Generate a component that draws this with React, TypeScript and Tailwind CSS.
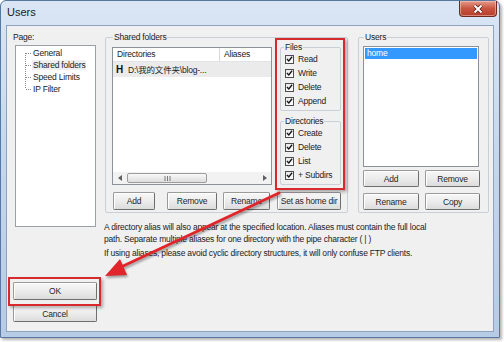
import React from "react";

type Kids = { children?: React.ReactNode; className?: string };

const Btn = ({ children, className = "" }: Kids) => (
  <div
    className={
      "flex items-center justify-center rounded-[2px] border border-[#9a9a9a] border-r-[#6e6e6e] border-b-[#6e6e6e] bg-linear-to-b from-[#f7f7f7] via-[#ececec] to-[#dcdcdc] shadow-[inset_1px_1px_0_#ffffff] text-[#1f1f1f] " +
      className
    }
  >
    {children}
  </div>
);

const Check = ({ label }: { label: string }) => (
  <div className="flex h-[14px] items-center pl-[3px]">
    <span className="flex h-[9px] w-[9px] items-center justify-center border border-[#4d4d4d] bg-linear-to-br from-[#e6e6e6] to-white">
      <svg viewBox="0 0 9 9" className="h-[8px] w-[8px]">
        <path d="M1.2 4.6 L3.6 7 L7.8 1.6" fill="none" stroke="#151515" strokeWidth="1.7" />
      </svg>
    </span>
    <span className="ml-[4px]">{label}</span>
  </div>
);

// connector of a tree row: first, middle or last
const TreeLine = ({ pos }: { pos: "first" | "mid" | "last" }) => (
  <svg width="15" height="12" className="shrink-0">
    <line
      x1="9.5"
      y1={pos === "first" ? 6 : 0}
      x2="9.5"
      y2={pos === "last" ? 6 : 12}
      stroke="#8c8c8c"
      strokeDasharray="1 1"
    />
    <line x1="10" y1="6.5" x2="15" y2="6.5" stroke="#8c8c8c" strokeDasharray="1 1" />
  </svg>
);

const treeItems: { label: string; pos: "first" | "mid" | "last" }[] = [
  { label: "General", pos: "first" },
  { label: "Shared folders", pos: "mid" },
  { label: "Speed Limits", pos: "mid" },
  { label: "IP Filter", pos: "last" },
];

export default function App() {
  return (
    <div className="relative h-[342px] w-[504px] overflow-hidden bg-white font-[family-name:'Liberation_Sans','Noto_Sans_CJK_SC',sans-serif] text-[8.5px] leading-[10px] tracking-[-0.2px] text-[#222]">
      {/* window frame */}
      <div className="flex h-[338px] w-[500px] flex-col rounded-t-[6px] border border-[#58789f] bg-linear-to-b from-[#dae6f4] via-[#c4d6ec] to-[#b6cbe5] shadow-[2px_2px_3px_rgba(0,0,0,0.3)]">
        {/* title bar */}
        <div className="flex h-[24px] shrink-0 items-start justify-between">
          <span className="pl-[6px] pt-[5px] text-[11px] leading-[13px] tracking-normal text-[#1a1a1a]">
            Users
          </span>
          <div className="mr-[2px] flex h-[16px] w-[38px] items-center justify-center rounded-b-[4px] border border-t-0 border-[#6e2a22] bg-linear-to-b from-[#e49a8a] via-[#c95440] to-[#b53d2a] shadow-[inset_0_0_0_1px_rgba(255,210,200,0.5)]">
            <svg width="12" height="10" viewBox="0 0 12 10">
              <path d="M2.5 1.5 L9.5 8.5 M9.5 1.5 L2.5 8.5" stroke="#5a1c14" strokeWidth="3.4" />
              <path d="M2.5 1.5 L9.5 8.5 M9.5 1.5 L2.5 8.5" stroke="#ffffff" strokeWidth="2" />
            </svg>
          </div>
        </div>

        {/* client area */}
        <div className="mx-[5px] mb-[5px] flex flex-1 border border-[#8ea3be] bg-[#f0f0f0]">
          {/* left column */}
          <div className="flex w-[91px] shrink-0 flex-col">
            <div className="ml-[6px] mt-[6px]">Page:</div>
            <div className="ml-[8px] mt-[3px] h-[182px] w-[81px] border border-[#9a9fa8] bg-white pt-[1px]">
              {treeItems.map((it) => (
                <div key={it.label} className="flex h-[12px] items-center">
                  <TreeLine pos={it.pos} />
                  <span
                    className={
                      "ml-[1px] px-[1px] " + (it.label === "Shared folders" ? "bg-[#efefef]" : "")
                    }
                  >
                    {it.label}
                  </span>
                </div>
              ))}
            </div>
            <div className="relative ml-[6px] mt-[55px] w-[84px]">
              <Btn className="h-[18px] w-[84px]">OK</Btn>
              <div className="absolute -bottom-[6px] -left-[5px] -right-[4px] -top-[5px] border-2 border-[#d72a2f] shadow-[2px_2px_3px_rgba(0,0,0,0.3)]" />
            </div>
            <Btn className="ml-[6px] mt-[5px] h-[17px] w-[84px]">Cancel</Btn>
          </div>

          {/* right area */}
          <div className="flex flex-1 flex-col pl-[7px]">
            <div className="mt-[6px] flex gap-[10px]">
              {/* Shared folders */}
              <fieldset className="h-[181px] w-[242px] rounded-[2px] border border-[#c9cfd4] px-[6px]">
                <legend className="ml-[1px] px-[1px]">Shared folders</legend>
                <div className="flex h-[143px]">
                  {/* directory list */}
                  <div className="mt-[5px] flex h-[138px] w-[160px] flex-col border border-[#8d929a] bg-white">
                    <div className="flex h-[14px] shrink-0 border-b border-[#e3e3e3] leading-[13px]">
                      <div className="w-[107px] border-r border-[#d8d8d8] pl-[4px]">Directories</div>
                      <div className="pl-[4px]">Aliases</div>
                    </div>
                    <div className="flex h-[15px] shrink-0 items-center bg-[#ebebeb] pl-[3px]">
                      <span className="w-[12px] text-[10px] font-bold tracking-normal text-[#111]">H</span>
                      <span>D:\我的文件夹\blog-...</span>
                    </div>
                    <div className="flex-1" />
                    {/* horizontal scrollbar */}
                    <div className="flex h-[12px] shrink-0 items-center bg-[#f2f2f2]">
                      <div className="flex w-[13px] justify-center">
                        <svg width="4" height="6" viewBox="0 0 4 6">
                          <path d="M4 0 L0 3 L4 6 Z" fill="#606060" />
                        </svg>
                      </div>
                      <div className="ml-[1px] flex h-[10px] w-[80px] items-center justify-center rounded-[2px] border border-[#9c9c9c] bg-linear-to-b from-[#f8f8f8] to-[#dedede]">
                        <svg width="7" height="5" viewBox="0 0 7 5">
                          <path d="M1 0 V5 M3.5 0 V5 M6 0 V5" stroke="#7a7a7a" strokeWidth="1" />
                        </svg>
                      </div>
                      <div className="flex-1" />
                      <div className="flex w-[13px] justify-center">
                        <svg width="4" height="6" viewBox="0 0 4 6">
                          <path d="M0 0 L4 3 L0 6 Z" fill="#606060" />
                        </svg>
                      </div>
                    </div>
                  </div>

                  {/* permissions */}
                  <div className="relative ml-[8px] flex w-[61px] flex-col">
                    <fieldset className="rounded-[2px] border border-[#c9cfd4] pb-[2px] pl-[1px]">
                      <legend className="ml-[2px] px-[1px]">Files</legend>
                      <Check label="Read" />
                      <Check label="Write" />
                      <Check label="Delete" />
                      <Check label="Append" />
                    </fieldset>
                    <fieldset className="mt-[5px] rounded-[2px] border border-[#c9cfd4] pb-[2px] pl-[1px]">
                      <legend className="ml-[2px] px-[1px]">Directories</legend>
                      <Check label="Create" />
                      <Check label="Delete" />
                      <Check label="List" />
                      <Check label="+ Subdirs" />
                    </fieldset>
                    <div className="absolute -bottom-[5px] -left-[5px] -right-[4px] -top-[4px] border-2 border-[#d72a2f] shadow-[2px_2px_3px_rgba(0,0,0,0.3)]" />
                  </div>
                </div>
                <div className="mt-[7px] flex">
                  <Btn className="ml-[1px] h-[18px] w-[42px]">Add</Btn>
                  <Btn className="ml-[12px] h-[18px] w-[50px]">Remove</Btn>
                  <Btn className="ml-[6px] h-[18px] w-[47px]">Rename</Btn>
                  <Btn className="ml-[7px] h-[18px] w-[64px]">Set as home dir</Btn>
                </div>
              </fieldset>

              {/* Users */}
              <fieldset className="h-[181px] w-[131px] rounded-[2px] border border-[#c9cfd4] pl-[4px]">
                <legend className="ml-[1px] px-[1px]">Users</legend>
                <div className="mt-[4px] h-[121px] w-[116px] border border-[#8d929a] bg-white p-[1px]">
                  <div className="h-[11px] bg-[#3399ff] pl-[2px] leading-[11px] text-white">home</div>
                </div>
                <div className="mt-[3px] flex">
                  <Btn className="h-[17px] w-[56px]">Add</Btn>
                  <Btn className="ml-[6px] h-[17px] w-[55px]">Remove</Btn>
                </div>
                <div className="mt-[6px] flex">
                  <Btn className="h-[17px] w-[56px]">Rename</Btn>
                  <Btn className="ml-[6px] h-[17px] w-[55px]">Copy</Btn>
                </div>
              </fieldset>
            </div>

            <div className="-ml-[1px] mt-[8px] leading-[12px]">
              A directory alias will also appear at the specified location. Aliases must contain the full local
              <br />
              path. Separate multiple aliases for one directory with the pipe character ( | )
            </div>
            <div className="-ml-[1px] mt-[2px] leading-[12px]">
              If using aliases, please avoid cyclic directory structures, it will only confuse FTP clients.
            </div>
          </div>
        </div>
      </div>

      {/* red annotation arrow */}
      <svg
        width="504"
        height="342"
        className="pointer-events-none absolute left-0 top-0 drop-shadow-[1px_2px_1px_rgba(0,0,0,0.35)]"
      >
        <line x1="279" y1="193" x2="121" y2="267" stroke="#e0262b" strokeWidth="3" strokeLinecap="round" />
        <polygon points="105,276 127,275 120,259" fill="#e0262b" />
      </svg>
    </div>
  );
}
